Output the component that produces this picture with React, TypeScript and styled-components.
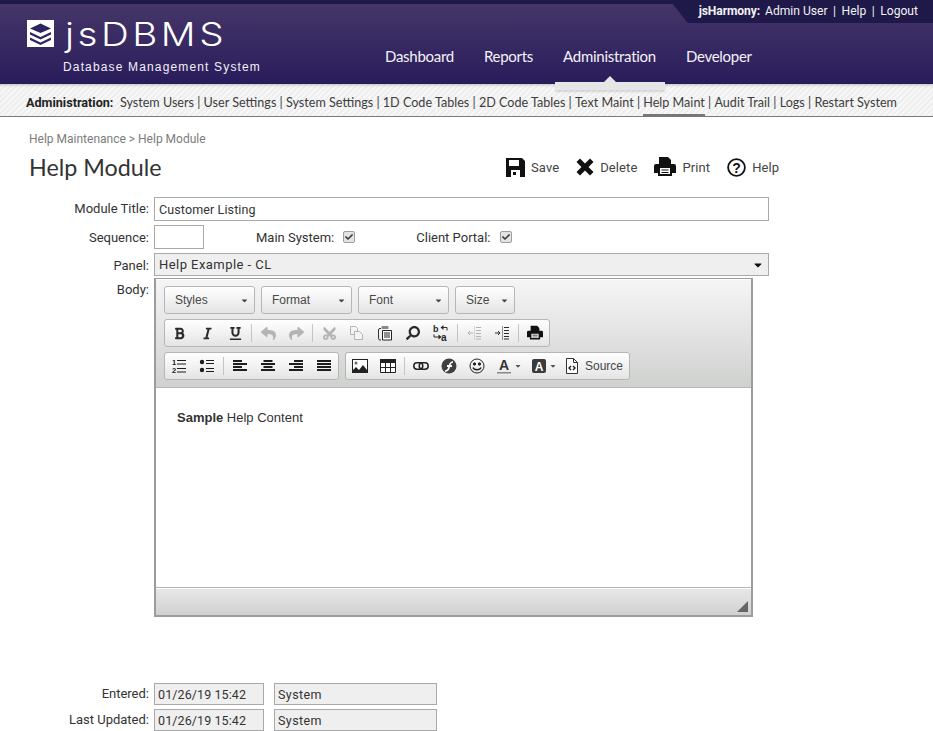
import React from 'react';
import styled, { createGlobalStyle } from 'styled-components';
import { FaBold, FaItalic, FaUnderline, FaReply, FaShare, FaCut, FaSearch, FaCaretDown, FaCheck } from 'react-icons/fa';

const Global = createGlobalStyle`
  html, body { margin: 0; padding: 0; background: #fff; }
  body { font-family: Roboto, "Liberation Sans", sans-serif; color: #333; width: 933px; height: 731px; overflow: hidden; }
  * { box-sizing: border-box; }
`;

const Page = styled.div`width: 933px; height: 731px; overflow: hidden;`;

const Header = styled.header`
  position: relative;
  z-index: 1;
  height: 84px;
  border-top: 4px solid #1f1949;
  background: linear-gradient(#453669, #291c5b);
  display: flex;
  align-items: flex-start;
`;
const Brand = styled.div`
  width: 385px;
  padding: 14px 0 0 27px;
  flex: none;
`;
const LogoRow = styled.div`display: flex; align-items: center; gap: 11px; height: 36px;`;
const LogoMark = styled.svg`width: 27px; height: 27px; flex: none; margin-top: -6px;`;
const LogoText = styled.div`
  font: 300 33px/36px Inter, sans-serif;
  letter-spacing: 3px;
  color: #fff;
  margin-top: -4px;
  transform: scaleX(1.17);
  transform-origin: left center;
`;
const Tagline = styled.div`
  font: 12px/16px "Liberation Sans", sans-serif;
  letter-spacing: 1.15px;
  color: #f2f0f6;
  margin: 5px 0 0 36px;
`;
const MainNav = styled.nav`display: flex; gap: 30px; padding-top: 43px;`;
const NavItem = styled.a`
  position: relative;
  font: 15px/18px Lato, sans-serif;
  letter-spacing: -.28px;
  color: #f4f2f8;
  &[data-active='true']::after {
    content: '';
    position: absolute;
    left: -8px; right: -9px; top: 35px;
    height: 8px;
    background: #e6e6e6;
    box-shadow: 0 2px 2px rgba(0,0,0,.12);
  }
  &[data-active='true']::before {
    content: '';
    position: absolute;
    left: 41px; top: 29px;
    border: 6px solid transparent;
    border-top: 0;
    border-bottom: 6px solid #e6e6e6;
  }
`;
const UserBar = styled.div`
  position: absolute;
  top: -4px; right: 0;
  height: 23px;
  padding: 0 15px 1px 29px;
  display: flex;
  align-items: center;
  gap: 2.5px;
  background: #1f1949;
  clip-path: polygon(0 0, 100% 0, 100% 100%, 18px 100%);
  font: 12.1px/14px Roboto, sans-serif;
  color: #f2f2f2;
  white-space: pre;
`;
const UserStrong = styled.strong`font-weight: 700; letter-spacing: -.1px; margin-right: 2.5px;`;

const SubNav = styled.div`
  position: relative;
  height: 33px;
  padding: 5px 0 0 26px;
  display: flex;
  align-items: center;
  border-bottom: 1px solid #7a7a7a;
  background: repeating-linear-gradient(135deg, #eeeeee 0 2px, #f7f7f7 2px 4px);
  box-shadow: inset 0 3px 3px -2px rgba(0,0,0,.22);
  font: 12.6px/16px Lato, sans-serif;
  color: #3d3d3d;
  white-space: pre;
`;
const SubLabel = styled.strong`
  font: 700 12.6px/16px Roboto, sans-serif;
  letter-spacing: 0;
  color: #222;
  margin-right: 6.5px;
`;
const SubLink = styled.a`
  position: relative;
  &[data-active='true']::after {
    content: '';
    position: absolute;
    left: 0; right: 0; top: 19px;
    height: 3px;
    background: #777;
  }
`;

const Main = styled.main`padding: 15px 0 0 29px;`;
const Crumbs = styled.div`font-size: 12px; line-height: 14px; color: #7c7c7c;`;
const TitleRow = styled.div`display: flex; align-items: center; height: 28px; margin-top: 7px;`;
const Title = styled.h1`
  margin: 0;
  width: 477px;
  font: 400 23.3px/28px Lato, sans-serif;
  color: #333;
`;
const Actions = styled.div`display: flex; font-size: 13px; letter-spacing: .1px; color: #444;`;
const Action = styled.span`
  display: flex;
  align-items: center;
  gap: 6px;
  margin-right: 17px;
  svg { display: block; flex: none; }
`;

const Form = styled.div`
  margin: 16px 0 0 -29px;
  display: grid;
  grid-template-columns: 149px 1fr;
  column-gap: 5px;
  row-gap: 4px;
  font-size: 13px;
`;
const Label = styled.label`
  text-align: right;
  color: #333;
  height: ${p => p.$h || 24}px;
  line-height: ${p => p.$lh || 25}px;
`;
const Field = styled.div`
  height: 24px;
  border: 1px solid #a9a9a9;
  padding: 0 4px;
  font-size: 12.5px;
  line-height: 23px;
  letter-spacing: .12px;
  color: #333;
  background: #fff;
  width: ${p => p.$w}px;
`;
const Inline = styled.div`display: flex; align-items: center; height: 24px;`;
const CheckLabel = styled.span`margin-left: ${p => p.$ml}px;`;
const Check = styled.span`
  width: 12px; height: 12px;
  margin-left: ${p => p.$ml}px;
  background: #e3e3e3;
  border: 1px solid #9d9d9d;
  border-radius: 2px;
  display: flex; align-items: center; justify-content: center;
  svg { width: 8px; height: 8px; color: #333; }
`;
const Select = styled(Field)`
  width: 615px;
  height: 23px;
  background: #efefef;
  display: flex;
  align-items: center;
  justify-content: space-between;
  padding-right: 4px;
  font-size: 13px;
  letter-spacing: .45px;
  svg { width: 12px; height: 12px; color: #111; }
`;

const Editor = styled.div`
  width: 599px;
  height: 339px;
  margin-top: -3px;
  border: 2px solid #9c9c9c;
  border-top-width: 1px;
  display: flex;
  flex-direction: column;
`;
const Toolbar = styled.div`
  height: 109px;
  padding: 7px 0 0 8px;
  background: linear-gradient(#f5f5f5, #cfd1cf);
  border-bottom: 1px solid #b6b6b6;
  display: flex;
  flex-direction: column;
  gap: 5px;
  box-shadow: inset 0 1px 0 #fff;
`;
const ToolRow = styled.div`display: flex; gap: 6px; height: 28px;`;
const Combo = styled.div`
  width: ${p => p.$w}px;
  height: 28px;
  padding: 0 5px 0 10px;
  border: 1px solid #b6b6b6;
  border-radius: 3px;
  background: linear-gradient(#fff, #e4e4e4);
  display: flex;
  align-items: center;
  justify-content: space-between;
  font: 12px "Liberation Sans", Arial, sans-serif;
  color: #484848;
  svg { width: 9px; height: 9px; color: #444; }
`;
const Group = styled.div`
  height: 28px;
  border: 1px solid #b6b6b6;
  border-radius: 3px;
  background: linear-gradient(#fff, #e4e4e4);
  display: flex;
  align-items: center;
`;
const Tool = styled.span`
  width: 28px;
  height: 26px;
  flex: none;
  display: flex;
  align-items: center;
  justify-content: center;
  color: ${p => (p.$off ? '#b4b4b4' : '#2a2a2a')};
  svg { width: ${p => p.$s || 16}px; height: ${p => p.$s || 16}px; display: block; }
`;
const WideTool = styled(Tool)`width: 35px; gap: 2px; svg.caret { width: 8px; height: 8px; color: #555; }`;
const Sep = styled.span`width: 1px; height: 18px; background: #c4c4c4; flex: none; margin: 0 2px;`;
const SourceTool = styled.span`
  display: flex; align-items: center; gap: 6px; padding: 0 6px 0 4px;
  font: 12px "Liberation Sans", Arial, sans-serif; color: #484848;
  svg { width: 14px; height: 16px; display: block; }
`;
const Body = styled.div`
  flex: 1;
  background: #fff;
  padding: 22px 21px;
  font: 13px/16px "Liberation Sans", Arial, sans-serif;
  color: #333;
`;
const EditorFoot = styled.div`
  height: 28px;
  border-top: 1px solid #b6b6b6;
  background: linear-gradient(#e8e8e8, #cfd1cf);
  box-shadow: inset 0 1px 0 #fff;
  display: flex;
  align-items: flex-end;
  justify-content: flex-end;
  padding: 0 3px 3px 0;
`;
const Grip = styled.svg`width: 11px; height: 11px; display: block;`;

const Footer = styled.div`
  margin: 66px 0 0 -29px;
  display: grid;
  grid-template-columns: 149px 110px 168px;
  column-gap: 5px;
  row-gap: 4px;
  font-size: 13px;
`;
const ReadField = styled.div`
  height: 22px;
  border: 1px solid #a9a9a9;
  background: #efefef;
  padding: 0 3px;
  font-size: 12.5px;
  line-height: 21px;
  letter-spacing: ${p => p.$ls}px;
  color: #333;
  margin-left: ${p => p.$ml || 0}px;
`;

const subLinks = ['System Users','User Settings','System Settings','1D Code Tables','2D Code Tables','Text Maint','Help Maint','Audit Trail','Logs','Restart System'];

const SaveIcon = () => (
  <svg width="19" height="19" viewBox="0 0 19 19">
    <path fillRule="evenodd" fill="#111" d="M0 0h16l3 3v16H0zM3 2v6h10V2zM5 12v7h9v-7z" />
    <rect x="7" y="14" width="3" height="3" fill="#111" />
  </svg>
);
const DeleteIcon = () => (
  <svg width="18" height="18" viewBox="0 0 18 18">
    <path fill="#111" d="M4 .5 9 5.5 14 .5l3.500 3.500-5 5 5 5-3.500 3.500-5-5-5 5L.5 14l5-5-5-5z" />
  </svg>
);
const PrintIcon = ({ size = 22 }: { size?: number }) => (
  <svg width={size} height={size} viewBox="0 0 22 20">
    <path fill="#111" d="M5 0h9l3 3v5H5z" />
    <path fill="#111" fillRule="evenodd" d="M2 7h18q2 0 2 2v7h-4v3H4v-3H0V9q0-2 2-2zM6 11v6h10v-6z" />
    <path fill="#111" d="M7.5 12.5h7v1h-7zM7.5 15h7v1h-7z" />
  </svg>
);
const HelpIcon = () => (
  <svg width="19" height="19" viewBox="0 0 19 19">
    <circle cx="9.5" cy="9.5" r="8.4" fill="none" stroke="#111" strokeWidth="1.8" />
    <text x="9.5" y="14.5" textAnchor="middle" fontSize="14" fontWeight="700" fontFamily="Liberation Sans" fill="#111">?</text>
  </svg>
);
const CopyIcon = () => (
  <svg viewBox="0 0 16 16" fill="none" stroke="currentColor">
    <path d="M1.5 1.5h5l2 2v3M1.5 1.5v8h4" />
    <path d="M5.5 6.5h5l3 3v5h-8z" fill="#f4f4f4" />
  </svg>
);
const PasteIcon = () => (
  <svg viewBox="0 0 16 16">
    <path d="M4 3.5H3q-1.5 0-1.5 1.5v8.5q0 1.5 1.5 1.500h1" fill="none" stroke="#333" />
    <rect x="4.5" y="1" width="7" height="3" rx=".8" fill="#888" />
    <path d="M5.5 5.5h9v9.500h-9z" fill="#fff" stroke="#222" />
    <path d="M7 8h6M7 10h6M7 12h6" stroke="#222" />
  </svg>
);
const ReplaceIcon = () => (
  <svg viewBox="0 0 16 16">
    <text x="0" y="7" fontSize="9" fontWeight="700" fontFamily="Liberation Sans" fill="#2a2a2a">b</text>
    <text x="8" y="15.5" fontSize="10" fontWeight="700" fontFamily="Liberation Sans" fill="#2a2a2a">a</text>
    <path d="M10 2.5h4v3M1 9.5v2.500h5" fill="none" stroke="#2a2a2a" />
    <path d="M10.5 0v5L7.5 2.500zM5.5 9.500v5l3-2.500z" fill="#2a2a2a" />
  </svg>
);
const Bars = ({ rows }: { rows: [number, number][] }) => (
  <svg viewBox="0 0 16 16">
    {rows.map(([x, w], i) => (
      <rect key={i} x={x} y={2 + i * 3} width={w} height="2" fill="#1d1d1d" />
    ))}
  </svg>
);
const IndentIcon = ({ out }: { out?: boolean }) => (
  <svg viewBox="0 0 16 16" stroke="currentColor" fill="none">
    <path d="M8.5 1.5v13" strokeDasharray="1 1" />
    <path d="M10 2.5h5M10 5.5h5M10 8.5h5M10 11.5h5M10 14h5" />
    {out ? <path d="M7 8H2M4 6 2 8l2 2" /> : <path d="M1 8h5M4 6l2 2-2 2" />}
  </svg>
);
const OlIcon = () => (
  <svg viewBox="0 0 16 16">
    <text x="1" y="7" fontSize="7.5" fontWeight="700" fontFamily="Liberation Sans" fill="#1d1d1d">1</text>
    <text x="1" y="15" fontSize="7.5" fontWeight="700" fontFamily="Liberation Sans" fill="#1d1d1d">2</text>
    <path d="M6 2.5h9M6 6h9M6 10.5h9M6 14h9" stroke="#1d1d1d" strokeWidth="1.2" />
  </svg>
);
const UlIcon = () => (
  <svg viewBox="0 0 16 16">
    <circle cx="3" cy="4" r="2.2" fill="#1d1d1d" /><circle cx="3" cy="12" r="2.2" fill="#1d1d1d" />
    <path d="M7 2.5h8M7 5.5h8M7 10.5h8M7 13.5h8" stroke="#1d1d1d" strokeWidth="1.2" />
  </svg>
);
const ImageIcon = () => (
  <svg viewBox="0 0 16 16">
    <rect x=".5" y="1.5" width="15" height="13" fill="#fff" stroke="#222" />
    <path d="M1 14v-2l3-3 3 3 4-5 4 5v2z" fill="#222" />
    <circle cx="4" cy="5" r="1.5" fill="#666" />
  </svg>
);
const TableIcon = () => (
  <svg viewBox="0 0 16 16">
    <rect x="0" y="1" width="16" height="4" fill="#222" />
    <path d="M.5 4.5h15v10H.5zM.5 9.5h15M5.5 4.5v10M10.5 4.5v10" fill="#fff" stroke="#222" />
  </svg>
);
const LinkIcon = () => (
  <svg viewBox="0 0 16 16" fill="none" stroke="#222" strokeWidth="1.5">
    <rect x=".8" y="4.8" width="9" height="6.4" rx="3.2" />
    <rect x="6.2" y="4.8" width="9" height="6.4" rx="3.2" />
  </svg>
);
const FlashIcon = () => (
  <svg viewBox="0 0 16 16">
    <circle cx="8" cy="8" r="7.5" fill="#404040" />
    <path d="M12 3C9 3.5 8.3 5.5 7.8 7H6v2h1.2C6.8 11 6 12 4 12.3V14c3-.2 4.5-2.2 5-5h2V7H9.5C10 5.5 10.8 5 12 4.8z" fill="#fff" />
  </svg>
);
const SmileIcon = () => (
  <svg viewBox="0 0 16 16" fill="none" stroke="#222">
    <circle cx="8" cy="8" r="7" />
    <circle cx="5.5" cy="6" r="1.2" fill="#222" /><circle cx="10.5" cy="6" r="1.2" fill="#222" />
    <path d="M4 9.5c1 3 7 3 8 0" strokeWidth="1.3" />
  </svg>
);
const TextColorIcon = () => (
  <svg viewBox="0 0 16 16">
    <text x="8" y="12" textAnchor="middle" fontSize="14" fontWeight="700" fontFamily="Liberation Sans" fill="#333">A</text>
    <rect x="1" y="14" width="14" height="1.5" fill="#888" />
  </svg>
);
const BgColorIcon = () => (
  <svg viewBox="0 0 16 16">
    <rect x="1" y="1" width="14" height="14" rx="2" fill="#3a3a3a" />
    <text x="8" y="12.5" textAnchor="middle" fontSize="12" fontWeight="700" fontFamily="Liberation Sans" fill="#fff">A</text>
  </svg>
);
const SourceIcon = () => (
  <svg viewBox="0 0 14 16">
    <path d="M1.5.5h7l4 4v11h-11z M8.5.5v4h4" fill="#fff" stroke="#333" />
    <path d="M6 8 4 10l2 2M8 8l2 2-2 2" fill="none" stroke="#222" strokeWidth="1.4" />
  </svg>
);

export default function App() {
  return (
    <Page>
      <Global />
      <Header>
        <Brand>
          <LogoRow>
            <LogoMark viewBox="0 0 27 27">
              <rect width="27" height="27" fill="#fff" />
              <path d="M13.5 3.5 24 8.5 13.5 13 3 8.5z" fill="#2f2360" />
              <path d="M3 12l10.5 5L24 12v2.5l-10.5 5L3 14.5z" fill="#2f2360" />
              <path d="M3 17.5l10.5 5 10.5-5V20l-10.5 5L3 20z" fill="#2f2360" />
            </LogoMark>
            <LogoText>jsDBMS</LogoText>
          </LogoRow>
          <Tagline>Database Management System</Tagline>
        </Brand>
        <MainNav>
          <NavItem>Dashboard</NavItem>
          <NavItem>Reports</NavItem>
          <NavItem data-active="true">Administration</NavItem>
          <NavItem>Developer</NavItem>
        </MainNav>
        <UserBar>
          <UserStrong>jsHarmony:</UserStrong>
          <span>Admin User</span><span> | </span><span>Help</span><span> | </span><span>Logout</span>
        </UserBar>
      </Header>
      <SubNav>
        <SubLabel>Administration:</SubLabel>
        {subLinks.map((l, i) => (
          <React.Fragment key={l}>
            {i > 0 && ' | '}
            <SubLink data-active={l === 'Help Maint'}>{l}</SubLink>
          </React.Fragment>
        ))}
      </SubNav>
      <Main>
        <Crumbs>Help Maintenance &gt; Help Module</Crumbs>
        <TitleRow>
          <Title>Help Module</Title>
          <Actions>
            <Action><SaveIcon />Save</Action>
            <Action><DeleteIcon />Delete</Action>
            <Action><PrintIcon />Print</Action>
            <Action><HelpIcon />Help</Action>
          </Actions>
        </TitleRow>
        <Form>
          <Label $lh={24}>Module Title:</Label>
          <Field $w={615}>Customer Listing</Field>
          <Label>Sequence:</Label>
          <Inline>
            <Field $w={50} />
            <CheckLabel $ml={52}>Main System:</CheckLabel>
            <Check $ml={9}><FaCheck /></Check>
            <CheckLabel $ml={61}>Client Portal:</CheckLabel>
            <Check $ml={9}><FaCheck /></Check>
          </Inline>
          <Label>Panel:</Label>
          <Select>Help Example - CL<FaCaretDown /></Select>
          <Label $lh={17}>Body:</Label>
          <Editor>
            <Toolbar>
              <ToolRow>
                <Combo $w={91}>Styles<FaCaretDown /></Combo>
                <Combo $w={91}>Format<FaCaretDown /></Combo>
                <Combo $w={91}>Font<FaCaretDown /></Combo>
                <Combo $w={60}>Size<FaCaretDown /></Combo>
              </ToolRow>
              <ToolRow>
                <Group>
                  <Tool $s={13}><FaBold /></Tool><Tool $s={13}><FaItalic /></Tool><Tool $s={13}><FaUnderline /></Tool><Sep />
                  <Tool $off $s={15}><FaReply /></Tool><Tool $off $s={15}><FaShare /></Tool><Sep />
                  <Tool $off $s={15}><FaCut style={{ transform: 'rotate(-90deg)' }} /></Tool><Tool $off><CopyIcon /></Tool><Tool><PasteIcon /></Tool>
                  <Tool $s={14}><FaSearch style={{ transform: 'scaleX(-1)' }} /></Tool><Tool><ReplaceIcon /></Tool><Sep />
                  <Tool $off><IndentIcon out /></Tool><Tool><IndentIcon /></Tool><Sep />
                  <Tool><PrintIcon size={16} /></Tool>
                </Group>
              </ToolRow>
              <ToolRow>
                <Group>
                  <Tool><OlIcon /></Tool><Tool><UlIcon /></Tool><Sep />
                  <Tool><Bars rows={[[1, 9], [1, 14], [1, 9], [1, 14]]} /></Tool>
                  <Tool><Bars rows={[[3.5, 9], [1, 14], [3.5, 9], [1, 14]]} /></Tool>
                  <Tool><Bars rows={[[6, 9], [1, 14], [6, 9], [1, 14]]} /></Tool>
                  <Tool><Bars rows={[[1, 14], [1, 14], [1, 14], [1, 14]]} /></Tool>
                </Group>
                <Group>
                  <Tool><ImageIcon /></Tool><Tool><TableIcon /></Tool><Sep />
                  <Tool><LinkIcon /></Tool><Tool><FlashIcon /></Tool><Tool><SmileIcon /></Tool>
                  <WideTool><TextColorIcon /><FaCaretDown className="caret" /></WideTool>
                  <WideTool><BgColorIcon /><FaCaretDown className="caret" /></WideTool>
                  <SourceTool><SourceIcon />Source</SourceTool>
                </Group>
              </ToolRow>
            </Toolbar>
            <Body><strong>Sample</strong> Help Content</Body>
            <EditorFoot>
              <Grip viewBox="0 0 11 11"><path d="M11 0v11H0z" fill="#666" /></Grip>
            </EditorFoot>
          </Editor>
        </Form>
        <Footer>
          <Label $h={22} $lh={22}>Entered:</Label>
          <ReadField $ls={.1}>01/26/19 15:42</ReadField>
          <ReadField $ls={.42} $ml={5}>System</ReadField>
          <Label $h={22} $lh={22}>Last Updated:</Label>
          <ReadField $ls={.1}>01/26/19 15:42</ReadField>
          <ReadField $ls={.42} $ml={5}>System</ReadField>
        </Footer>
      </Main>
    </Page>
  );
}
